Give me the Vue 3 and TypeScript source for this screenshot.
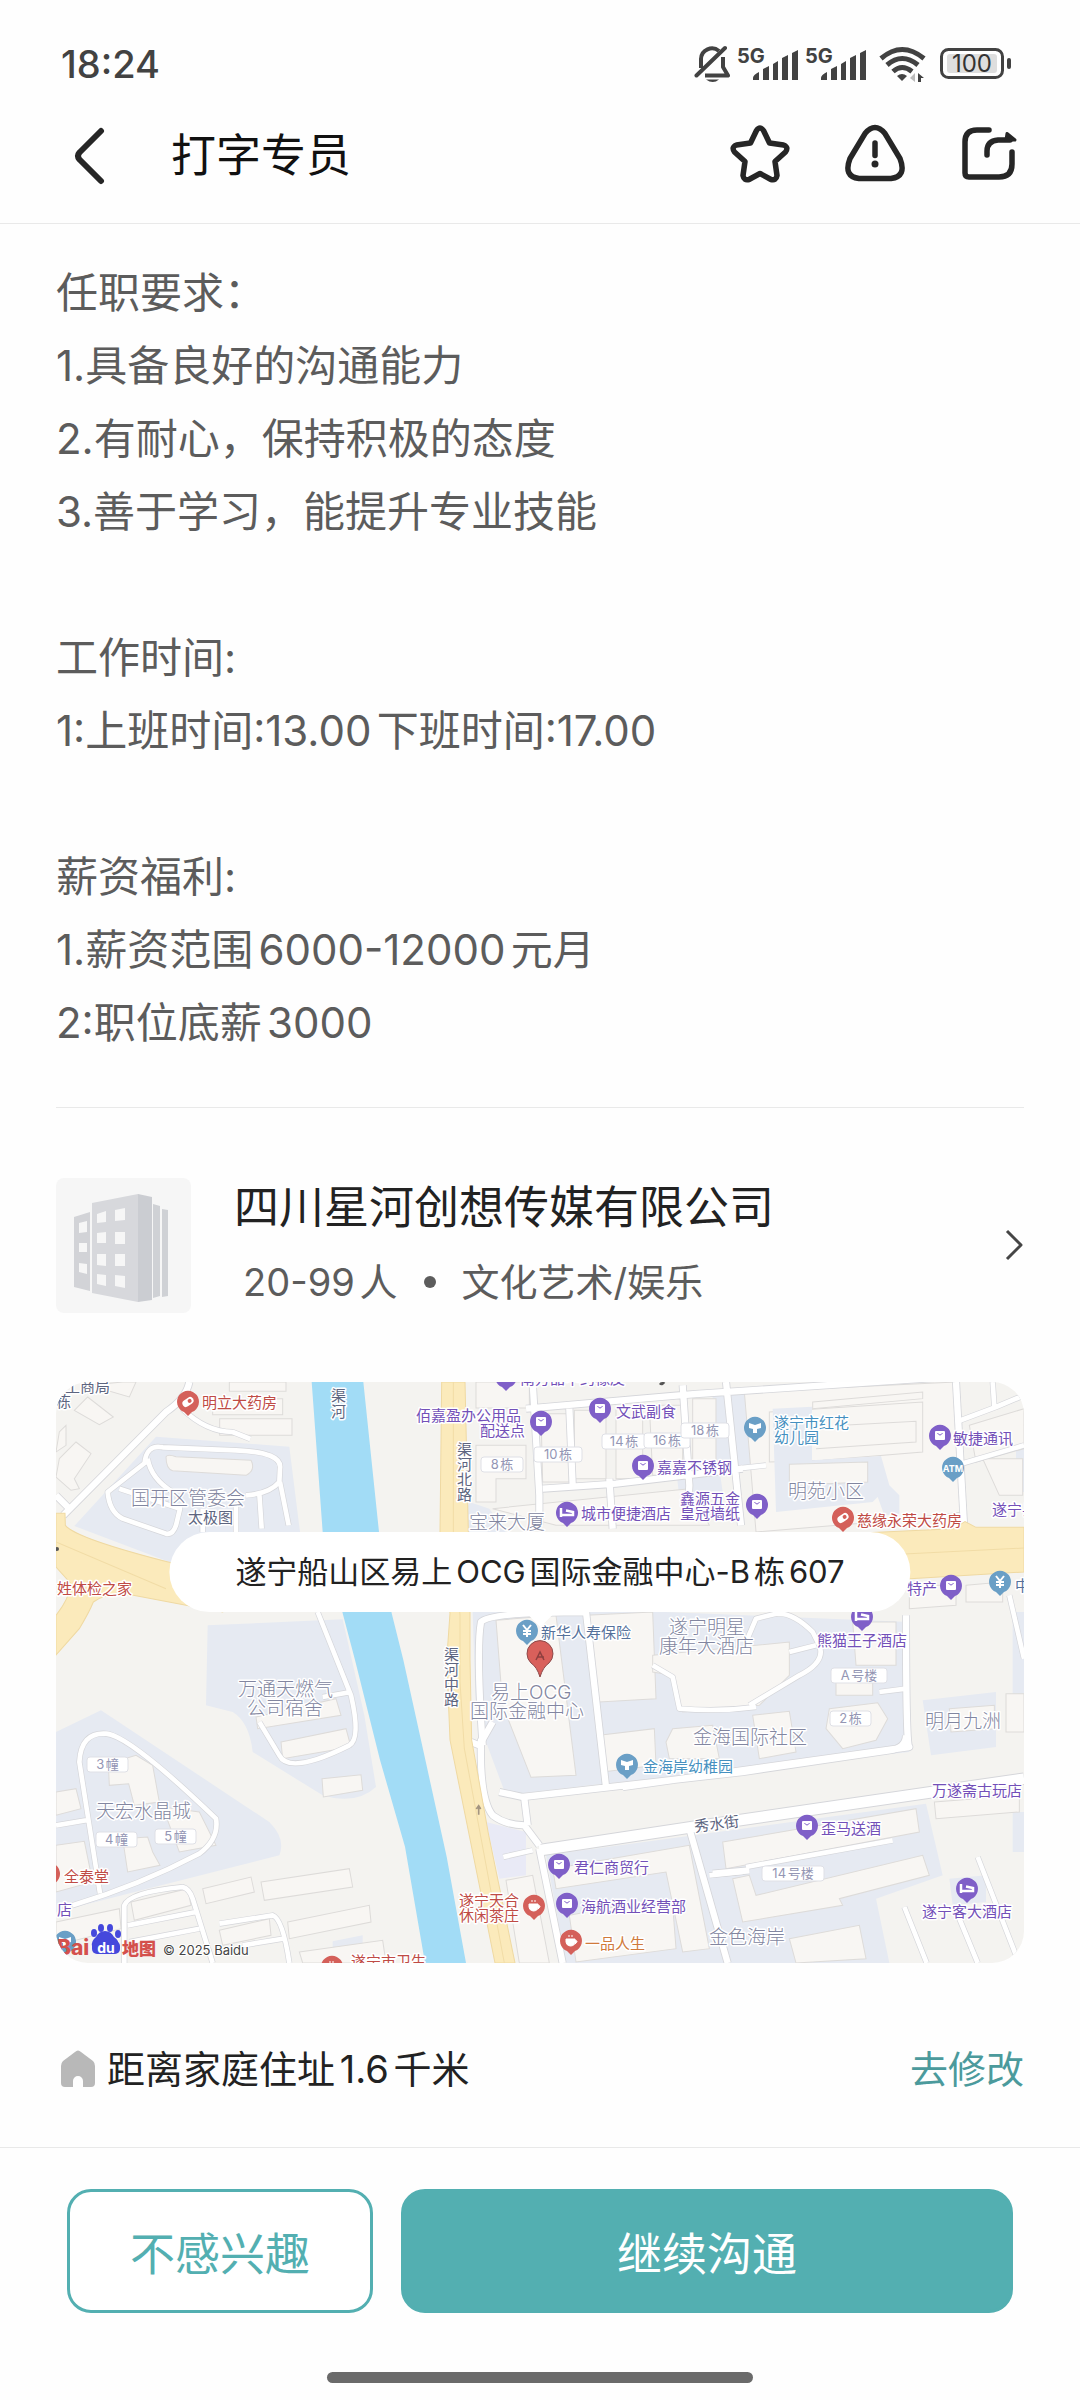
<script setup lang="ts">
type Tone = 'shop' | 'health' | 'school' | 'area' | 'road' | 'food' | 'bank'
interface Label { t: string; x: number; y: number; k: Tone }
interface Pin { x: number; y: number; k: 'shop' | 'health' | 'school' | 'hotel' | 'bank' | 'atm' | 'food' }
interface Badge { t: string; x: number; y: number; w: number }

const jobLines: string[] = [
  '任职要求：',
  '1.具备良好的沟通能力',
  '2.有耐心，保持积极的态度',
  '3.善于学习，能提升专业技能',
  '',
  '工作时间:',
  '1:上班时间:13.00下班时间:17.00',
  '',
  '薪资福利:',
  '1.薪资范围6000-12000元月',
  '2:职位底薪3000',
]

const labels: Label[] = [
  { t: '工商局', x: 9, y: 10, k: 'road' },
  { t: '栋', x: 0, y: 25, k: 'road' },
  { t: '明立大药房', x: 146, y: 26, k: 'health' },
  { t: '渠', x: 275, y: 19, k: 'road' },
  { t: '河', x: 275, y: 35, k: 'road' },
  { t: '国开区管委会', x: 75, y: 123, k: 'area' },
  { t: '太极图', x: 132, y: 141, k: 'road' },
  { t: '姓体检之家', x: 1, y: 212, k: 'health' },
  { t: '南方晶中约橡皮', x: 464, y: 2, k: 'shop' },
  { t: '佰嘉盈办公用品', x: 360, y: 39, k: 'shop' },
  { t: '配送点', x: 424, y: 54, k: 'shop' },
  { t: '文武副食', x: 560, y: 35, k: 'shop' },
  { t: '嘉嘉不锈钢', x: 601, y: 91, k: 'shop' },
  { t: '城市便捷酒店', x: 525, y: 137, k: 'shop' },
  { t: '鑫源五金', x: 624, y: 122, k: 'shop' },
  { t: '皇冠墙纸', x: 624, y: 137, k: 'shop' },
  { t: '宝来大厦', x: 413, y: 147, k: 'area' },
  { t: '渠', x: 401, y: 73, k: 'road' },
  { t: '河', x: 401, y: 88, k: 'road' },
  { t: '北', x: 401, y: 103, k: 'road' },
  { t: '路', x: 401, y: 118, k: 'road' },
  { t: '渠', x: 388, y: 278, k: 'road' },
  { t: '河', x: 388, y: 293, k: 'road' },
  { t: '中', x: 388, y: 308, k: 'road' },
  { t: '路', x: 388, y: 323, k: 'road' },
  { t: '新华人寿保险', x: 485, y: 256, k: 'bank' },
  { t: '遂宁明星', x: 613, y: 252, k: 'area' },
  { t: '康年大酒店', x: 603, y: 271, k: 'area' },
  { t: '遂宁市红花', x: 718, y: 46, k: 'school' },
  { t: '幼儿园', x: 718, y: 61, k: 'school' },
  { t: '敏捷通讯', x: 897, y: 62, k: 'shop' },
  { t: '明苑小区', x: 732, y: 116, k: 'area' },
  { t: '慈缘永荣大药房', x: 801, y: 144, k: 'health' },
  { t: '遂宁县', x: 936, y: 133, k: 'shop' },
  { t: '特产', x: 851, y: 212, k: 'shop' },
  { t: '中', x: 959, y: 209, k: 'bank' },
  { t: '熊猫王子酒店', x: 761, y: 264, k: 'shop' },
  { t: '万通天燃气', x: 182, y: 314, k: 'area' },
  { t: '公司宿舍', x: 191, y: 333, k: 'area' },
  { t: '天宏水晶城', x: 40, y: 436, k: 'area' },
  { t: '全泰堂', x: 8, y: 500, k: 'health' },
  { t: '店', x: 1, y: 533, k: 'shop' },
  { t: '遂宁市卫生', x: 295, y: 585, k: 'health' },
  { t: '易上OCG', x: 435, y: 317, k: 'area' },
  { t: '国际金融中心', x: 414, y: 336, k: 'area' },
  { t: '金海岸幼稚园', x: 587, y: 390, k: 'school' },
  { t: '君仁商贸行', x: 518, y: 491, k: 'shop' },
  { t: '遂宁天合', x: 403, y: 524, k: 'health' },
  { t: '休闲茶庄', x: 403, y: 539, k: 'health' },
  { t: '海航酒业经营部', x: 525, y: 530, k: 'shop' },
  { t: '一品人生', x: 529, y: 567, k: 'food' },
  { t: '金海国际社区', x: 637, y: 362, k: 'area' },
  { t: '明月九洲', x: 869, y: 346, k: 'area' },
  { t: '万遂斋古玩店', x: 876, y: 414, k: 'shop' },
  { t: '歪马送酒', x: 765, y: 452, k: 'shop' },
  { t: '遂宁客大酒店', x: 866, y: 535, k: 'shop' },
  { t: '金色海岸', x: 653, y: 562, k: 'area' },
]

const pins: Pin[] = [
  { x: 132, y: 20, k: 'health' },
  { x: 450, y: -5, k: 'shop' },
  { x: 485, y: 40, k: 'shop' },
  { x: 544, y: 27, k: 'shop' },
  { x: 587, y: 84, k: 'shop' },
  { x: 511, y: 131, k: 'hotel' },
  { x: 701, y: 123, k: 'shop' },
  { x: 699, y: 46, k: 'school' },
  { x: 884, y: 54, k: 'shop' },
  { x: 897, y: 86, k: 'atm' },
  { x: 787, y: 136, k: 'health' },
  { x: 895, y: 204, k: 'shop' },
  { x: 944, y: 200, k: 'bank' },
  { x: 471, y: 249, k: 'bank' },
  { x: 806, y: 235, k: 'hotel' },
  { x: -7, y: 492, k: 'health' },
  { x: 9, y: 560, k: 'school' },
  { x: 276, y: 585, k: 'food' },
  { x: 571, y: 383, k: 'school' },
  { x: 503, y: 483, k: 'shop' },
  { x: 478, y: 524, k: 'food' },
  { x: 511, y: 522, k: 'shop' },
  { x: 515, y: 559, k: 'food' },
  { x: 751, y: 444, k: 'shop' },
  { x: 911, y: 507, k: 'hotel' },
]

const badges: Badge[] = [
  { t: '8栋', x: 425, y: 75, w: 42 },
  { t: '10栋', x: 478, y: 65, w: 48 },
  { t: '14栋', x: 546, y: 52, w: 44 },
  { t: '16栋', x: 588, y: 51, w: 46 },
  { t: '18栋', x: 625, y: 41, w: 48 },
  { t: '3幢', x: 31, y: 375, w: 41 },
  { t: '4幢', x: 40, y: 450, w: 41 },
  { t: '5幢', x: 99, y: 447, w: 41 },
  { t: 'A号楼', x: 775, y: 286, w: 56 },
  { t: '2栋', x: 774, y: 329, w: 41 },
  { t: '14号楼', x: 706, y: 484, w: 62 },
]

const pinColor: Record<Pin['k'], string> = {
  shop: '#7f5fc8', hotel: '#7f5fc8', health: '#d4605a', food: '#d4605a',
  school: '#6a9fc6', bank: '#6a9fc6', atm: '#6a9fc6',
}
</script>

<template>
  <div class="page">
    <div class="status">
      <span class="clock">18:24</span>
      <div class="indicators">
        <svg class="bell" width="36" height="40" viewBox="0 0 36 40" fill="none" stroke="#424242" stroke-width="4">
          <path d="M7 24V15a11 11 0 0 1 18-8M29 13v10l5 8.500H11" stroke-linejoin="round" />
          <path d="M2.500 31.500 31 4" stroke-linecap="round" />
          <path d="M12 35.500h13q-6 5-13 0Z" fill="#424242" stroke="none" />
        </svg>
        <svg v-for="n in 2" :key="n" class="signal" width="62" height="36" viewBox="0 0 62 36" fill="#424242">
          <text x="0" y="17" class="g5">5G</text>
          <path d="M16 32q0-3 6-6v8h-6ZM26 23l6-3v14h-6ZM36 18l5-3v19h-5ZM45 12l6-3v25h-6ZM55 7l6-3v30h-6Z" />
        </svg>
        <svg class="wifi" width="48" height="38" viewBox="0 0 48 38" fill="none" stroke="#424242" stroke-width="5">
          <path d="M2 13.500q21-18 43 0M8 20q15-13 31 0M14 26.500q9-8 19 0" />
          <path d="M18 31q5-4 10 0l-5 5Z" fill="#424242" stroke="none" />
          <path d="M36 28v9l-5-4Z" fill="#bbb" stroke="none" />
          <path d="M39 37v-9l6 5h-3v4Z" fill="#424242" stroke="none" />
        </svg>
        <svg class="battery" width="72" height="32" viewBox="0 0 72 32">
          <rect x="1.500" y="1.500" width="61" height="28" rx="7" fill="#fff" stroke="#424242" stroke-width="3" />
          <rect x="7" y="6" width="50" height="19" rx="3" fill="#dedede" />
          <rect x="67" y="10" width="4" height="11" rx="2" fill="#424242" />
          <text x="32" y="24" text-anchor="middle" class="pct">100</text>
        </svg>
      </div>
    </div>

    <header class="nav">
      <button class="icon-btn back" aria-label="返回">
        <svg width="32" height="58" viewBox="0 0 32 58" fill="none" stroke="#262626" stroke-width="6" stroke-linecap="round" stroke-linejoin="round">
          <path d="M28 4 6.500 25.500q-3 3.500 0 7L28 54" />
        </svg>
      </button>
      <h1>打字专员</h1>
      <div class="tools">
        <button class="icon-btn" aria-label="收藏">
          <svg width="60" height="60" viewBox="0 0 60 60" fill="none" stroke="#262626" stroke-width="5.500" stroke-linejoin="round">
            <path d="M26.500 6.500q3.500-5 7 0l6 12.500 14 2q5.500 2 2 7L45 37.500l2 14q-1 5.500-6 4L30 49.500l-11 6q-5 1.500-6-4l2-14L4.500 28q-3.500-5 2-7l14-2Z" />
          </svg>
        </button>
        <button class="icon-btn" aria-label="举报">
          <svg width="60" height="60" viewBox="0 0 60 60" fill="none" stroke="#262626" stroke-width="5.500" stroke-linecap="round">
            <path d="M20 9.500q10-12 20 0l15 25q7 18-9 20H14q-16-2-9-20Z" />
            <path d="M30 19v12.500" />
            <circle cx="30" cy="40" r="3.500" fill="#262626" stroke="none" />
          </svg>
        </button>
        <button class="icon-btn" aria-label="分享">
          <svg width="60" height="60" viewBox="0 0 60 60" fill="none" stroke="#262626" stroke-width="5.500" stroke-linecap="round">
            <path d="M29 6H17Q5 6 5 18v31q0 4 4 4h30q13 0 13-13V28" stroke-linejoin="round" />
            <path d="M27 31v-4q0-10 11-11h12" />
            <path d="M47 9.500 55 16H46Z" fill="#262626" stroke-width="3" stroke-linejoin="round" />
          </svg>
        </button>
      </div>
    </header>

    <main>
      <section class="description">
        <p v-for="(line, i) in jobLines" :key="i">{{ line }}</p>
      </section>

      <a class="company" href="#company">
        <svg class="logo" width="135" height="135" viewBox="0 0 135 135">
          <rect width="135" height="135" rx="8" fill="#f6f6f6" />
          <path d="M18 39 34 34v79l-16-4Z" fill="#d2d3d7" />
          <path d="M36 25 82 16v108l-46-9Z" fill="#d7d8dc" />
          <path d="M82 16l14 3v103l-14 2Z" fill="#cbcdd2" />
          <path d="M97 26l7 2v90l-7 2ZM106 31l6 1v86l-6 1Z" fill="#cfd1d5" />
          <path d="M41 36l9-3v11l-9 1ZM59 32l10-2v12l-10 1ZM41 55l9-1v11h-9ZM59 54h10v12H59ZM41 76h9v12l-9-1ZM59 76h10v12H59ZM41 96l9 1v11l-9-2ZM59 97l10 1v12l-10-2ZM23 45l8-2v11l-8 1ZM23 65h8v9h-8ZM23 85l8 1v10l-8-2Z" fill="#f6f6f6" />
        </svg>
        <div class="company-text">
          <strong>四川星河创想传媒有限公司</strong>
          <span class="meta"><span>20-99人</span><i class="dot"></i><span>文化艺术/娱乐</span></span>
        </div>
        <svg width="20" height="34" viewBox="0 0 20 34" fill="none" stroke="#454545" stroke-width="3" stroke-linejoin="round">
          <path d="M3 3 17 17 3 31" />
        </svg>
      </a>

      <section class="map" aria-label="公司位置">
        <svg class="map-art" viewBox="0 0 968 581">
          <rect width="968" height="581" fill="#f4f3f0" />
          <g transform="scale(.33334)">
            <!-- city blocks -->
            <g fill="#e6eaf2">
              <path d="M300 164 700 194 732 450H560L350 544 55 432Z" />
              <path d="M455 730 860 712 925 1000 960 1215Q900 1270 800 1240L590 1110Q580 1020 530 990L450 970Z" />
              <path d="M0 1050 135 985 640 1320Q690 1370 670 1420L0 1590Z" />
              <path d="M1250 690H1830L2560 720V1110L1600 1210 1350 1240 1260 1000Z" />
              <path d="M1210 450 1240 360 1300 380 1350 450Z" />
              <path d="M2150 75 2270 75V230L2480 220 2500 300 2530 340V395L2490 400 2470 360 2150 390Z" />
              <path d="M1970 36H2100V260H1970ZM2600 955 2820 930V1095L2625 1120Z" />
              <path d="M1470 1420 2610 1265 2660 1480 2460 1550 2500 1743H1530Z" />
              <path d="M2870 690H2904V950H2870ZM2870 1290H2904V1410H2870ZM2680 1490 2790 1480V1560L2690 1570Z" />
              <path d="M830 1678 920 1660V1690L830 1705Z" />
              <path d="M1860 260H1990L2000 330 1870 345ZM2880 200H2904V330H2880Z" />
            </g>
            <path d="M1290 1320 1410 1350V1480L1330 1490Z" fill="#e9eaf6" />
            <!-- buildings -->
            <g fill="#f8f6f3" stroke="#dddbd9" stroke-width="3">
              <path d="M330 224Q335 215 360 224L585 235Q600 265 570 280L350 266Q330 260 330 224Z" />
              <path d="M491 110H708V160H491ZM520 0H690V28H520ZM470 50H680V98H470Z" />
              <path d="M55 85 95 45 172 105 130 128ZM30 130 10 150 0 210 30 190ZM10 230 60 180 105 215 55 290 70 320 45 325 0 285ZM100 10 200 0 240 0 220 45Z" />
              <path d="M600 1005 840 950 855 1000 605 1040ZM675 1080 870 1040 885 1095 680 1130ZM798 1190 915 1178 920 1225 802 1245Z" />
              <path d="M157 1145 240 1120 290 1150 310 1260 235 1270 218 1205 160 1210ZM320 1275 430 1290 480 1390 370 1410ZM200 1370 275 1365 290 1410 312 1450 215 1470ZM0 1230 60 1220 75 1280 0 1300ZM0 1390 85 1378 110 1500 0 1530Z" />
              <path d="M440 1520 585 1485 595 1530 450 1565ZM615 1500 880 1460 890 1515 625 1555ZM695 1620 940 1570 945 1620 700 1670ZM490 1645 640 1610 645 1660 500 1690ZM225 1560 395 1520 405 1570 235 1615ZM0 1620 190 1580 195 1640 0 1690ZM730 1710 980 1675 990 1743H740Z" />
              <path d="M1260 0H1420V78H1260ZM1320 190H1410V290H1320V360H1260V190ZM1455 95H1540V300H1460ZM1555 85H1650V290H1555ZM1680 75H1760V290H1680ZM1780 70H1880V280H1790ZM1910 50H1980V270H1910Z" />
              <path d="M1310 380 1900 320 1960 430H1500Z" />
              <path d="M1320 715 1500 700 1560 1180 1425 1186 1340 970ZM1590 700 1790 690 1800 950 1630 960ZM1630 1060 1795 1040 1800 1150 1640 1170ZM1830 1080 1850 1040 1970 1030 1990 1130 1840 1130Z" />
              <path d="M1790 820 2200 780V880L2110 970 1880 990 1850 880 1790 870Z" />
              <path d="M2065 30 2700 0 2720 390 2460 420 2100 450ZM2140 90 2600 60V210L2300 235 2140 240Z" />
            </g>
            <path d="M2150 80 2268 74V235L2475 222 2500 310 2530 340V395L2485 400 2465 345 2450 360 2160 390Z" fill="#e6eaf2" />
            <g fill="#f8f6f3" stroke="#dddbd9" stroke-width="3">
              <path d="M2200 247 2435 240V300L2200 310Z" />
              <path d="M2270 60 2600 30V50L2270 80ZM2360 130 2580 118V180L2280 200M2740 130 2904 80V200L2760 240Z" />
              <path d="M2090 1000 2200 988 2220 1110 2110 1130ZM2320 980 2465 962 2495 1010 2460 1075 2360 1100 2310 1040ZM2340 900 2450 900V940H2340ZM2390 720 2520 720V850H2400ZM2680 980 2815 970V1040L2685 1050ZM2850 935H2904V1050H2850Z" />
              <path d="M2560 610H2700V670L2560 680ZM2730 610 2840 600V660H2730ZM2780 230H2900V340H2830Z" />
              <path d="M2635 1260 2890 1240V1290L2640 1310ZM2000 1380 2580 1280 2590 1350 2010 1460ZM2030 1490 2080 1480 2100 1540 2600 1420 2620 1480 2350 1550 2360 1570 2060 1620ZM2200 1670 2410 1630 2430 1730 2220 1743ZM1490 1460 1900 1390 1960 1700 1880 1710 1830 1470 1500 1520ZM1540 1600 1700 1570 1850 1570 1860 1700 1560 1740ZM1350 1495 1430 1480 1480 1743H1390Z" />
            </g>
            <!-- side streets: grey casing under white fill -->
            <g v-for="pass in 2" :key="pass" fill="none" :stroke="pass === 1 ? '#d5d6da' : '#fff'" stroke-linejoin="round">
              <g :stroke-width="pass === 1 ? 18 : 14">
                <path d="M378 80Q450 150 530 150L583 171M265 248Q270 185 320 196L540 205Q680 210 672 260L670 300Q640 335 570 340M270 240 155 330Q160 390 200 410L330 455Q350 460 360 430L372 380 190 320M275 230Q285 290 350 330M672 300 698 430M610 335 617 440M540 370V450M440 380V450" />
                <path d="M785 690 885 940Q915 1070 880 1090 700 1180 670 1120L610 1020M885 930 800 945" />
                <path d="M132 1534 70 1140Q75 1050 150 1055 220 1060 480 1310 490 1370 430 1415 250 1510 50 1570M0 1330 100 1313M205 1743V1570Q220 1530 380 1515 400 1520 410 1550L470 1743M215 1630 420 1590M220 1680 430 1640M490 1625 650 1600Q680 1610 700 1743M560 1690 680 1670" />
                <path d="M2545 1575 2612 1743M2710 1610 2765 1743M2765 1425 2880 1720M2070 1455 2510 1375M1960 1480 2060 1470M1342 1425 1430 1405" />
                <path d="M2080 970 2230 880Q2310 840 2290 790L2270 750Q2210 690 2160 695L2100 710 2070 780M2200 810 2280 790M1790 850 1850 885 1870 980Q1990 990 2100 975M2470 930 2550 920" />
                <path d="M2860 640 2904 830M2700 120 2820 75 2904 40M2810 0 2815 75M2700 250 2904 190M2040 260 2130 250" />
              </g>
              <g :stroke-width="pass === 1 ? 24 : 19">
                <path d="M0 340 35 375M22 400 330 90Q390 50 400 0" />
                <path d="M1410 80 1870 40 1920 36 2904 -30M1430 0 1450 340 1450 430M1540 80 1550 310M1660 290 1670 440M1880 10 1900 310 1895 400M2010 0 2055 430M1460 320 1680 305 2060 260" />
                <path d="M2700 0 2725 450" />
                <path d="M1280 1090Q1260 800 1275 720 1300 690 1600 690M1590 690 1650 1215M1700 1215 2560 1095Q2550 1100 2550 700M1330 1230 1400 1245 2060 1170 2500 1105Q2550 1100 2550 1060" />
                <path d="M1275 1070Q1270 1250 1310 1300 1350 1330 1405 1330L1450 1390M1405 1250 1415 1330M1245 1080 1270 1090 1310 1020" />
                <path d="M1900 1340 2015 1743M1450 1400 1520 1743M1970 1475 2080 1465" />
              </g>
              <g :stroke-width="pass === 1 ? 38 : 32">
                <path d="M1450 1405 1910 1335 2904 1190" />
              </g>
            </g>
            <path d="M767 0H922L969 450 1007 694 1042 834 1172 1424 1230 1743H1107L1047 1394 972 1134 897 834 860 694 800 450Z" fill="#a2dcf6" />
            <!-- main roads -->
            <g fill="#fbeabb" stroke="#efd9a2" stroke-width="3">
              <path d="M1157 0H1227L1237 450 1242 694 1242 834 1247 1074 1297 1354 1377 1743H1317L1182 1074 1172 834 1182 694 1152 450Z" />
              <path d="M0 394H27L28 430Q60 470 352 544L500 560V690L402 672 232 640Q150 630 112 660 100 690 70 740L0 819V700Q40 650 45 605L0 555Z" />
              <path d="M2400 454 2692 440 2727 419 2760 436H2904V570L2562 590H2400Z" />
            </g>
            <path d="M1192 0V450L1212 700V900L1225 1100 1345 1743M0 480 330 620M2500 518 2904 498" fill="none" stroke="#f1dca6" stroke-width="3" />
            <path d="M1268 1270v28m-7-17 7-10 6 10" stroke="#a39480" stroke-width="5" fill="none" />
          </g>

          <g v-for="(b, i) in badges" :key="'b' + i">
            <rect :x="b.x" :y="b.y" :width="b.w" height="15" rx="3" fill="#fff" stroke="#dfe0e6" />
            <text :x="b.x + b.w / 2" :y="b.y + 12" text-anchor="middle" class="badge">{{ b.t }}</text>
          </g>

          <g v-for="(p, i) in pins" :key="'p' + i" :transform="`translate(${p.x} ${p.y})`">
            <path d="M0 14-4 10A11 11 0 1 1 4 10Z" :fill="pinColor[p.k]" />
            <g v-if="p.k === 'shop'">
              <rect x="-5" y="-5" width="10" height="9" rx="1" fill="#fff" />
              <path d="M-2.500-3Q0 1 2.500-3" fill="none" :stroke="pinColor[p.k]" />
            </g>
            <path v-else-if="p.k === 'hotel'" d="M-6-5V4M-6 2H6V-1L-1-2.500" fill="none" stroke="#fff" stroke-width="2.500" />
            <g v-else-if="p.k === 'health'" transform="rotate(-35)">
              <rect x="-6" y="-3.500" width="12" height="7" rx="3.500" fill="#fff" />
              <circle cx="2" cy="0" r="2" :fill="pinColor[p.k]" />
            </g>
            <path v-else-if="p.k === 'school'" d="M-6-5 0-3 6-5V0L2 1V5H-2V1L-6 0Z" fill="#fff" />
            <path v-else-if="p.k === 'bank'" d="M-4-6 0-1 4-6M0-1V6M-4 0H4M-4 3H4" fill="none" stroke="#fff" stroke-width="2" />
            <path v-else-if="p.k === 'food'" d="M-5-2H4V1Q4 5-1 5-5 4-5 1ZM4-1q4 1 0 4M-2-6v2M1-6v2" fill="#fff" stroke="#fff" />
            <text v-else y="4" text-anchor="middle" class="atm">ATM</text>
          </g>

          <text v-for="(l, i) in labels" :key="'l' + i" :x="l.x" :y="l.y" class="label" :class="l.k">{{ l.t }}</text>
          <text x="639" y="450" transform="rotate(-7 639 450)" class="label road">秀水街</text>
          <path d="M604 1q2 2 4-1" stroke="#555" stroke-width="3" fill="none" />
          <circle cx="1" cy="167" r="2" fill="#555" />

          <path d="M484 295q-3-10-9-14a13 13 0 1 1 18 0q-6 4-9 14Z" fill="#d9605b" stroke="#8d4a4a" />
          <path d="M480 278 484 270 488 278M481 275H488" fill="none" stroke="#8d3f3f" stroke-width="1.500" />

          <text x="1" y="573" class="baidu">Bai</text>
          <g fill="#4548dc">
            <path d="M49 549q6 0 9 6 6 4 4 9-2 5-8 4h-10q-7 1-8-4-1-5 4-9 3-6 9-6Z" />
            <ellipse cx="38" cy="551" rx="3" ry="4" />
            <ellipse cx="45" cy="546" rx="3" ry="4" />
            <ellipse cx="54" cy="546" rx="3" ry="4" />
            <ellipse cx="62" cy="552" rx="3" ry="4" />
          </g>
          <rect x="36" y="559" width="28" height="13" rx="5" fill="#4548dc" />
          <text x="50" y="571" text-anchor="middle" class="du">du</text>
          <text x="66" y="573" class="ditu">地图</text>
          <text x="107" y="573" class="copy">© 2025 Baidu</text>
        </svg>
        <div class="bubble">遂宁船山区易上OCG国际金融中心-B栋607</div>
      </section>

      <section class="distance">
        <svg width="34" height="38" viewBox="0 0 34 38" fill="#b8b8b8">
          <path d="M14 2q3-3 6 0l12 9q2 2 2 5v17q0 4-4 4h-8v-6a5 5 0 0 0-10 0v6H4q-4 0-4-4V16q0-3 2-5Z" />
        </svg>
        <span>距离家庭住址1.6千米</span>
        <a href="#address">去修改</a>
      </section>
    </main>

    <footer>
      <div class="actions">
        <button class="plain">不感兴趣</button>
        <button class="primary">继续沟通</button>
      </div>
      <div class="home-bar"></div>
    </footer>
  </div>
</template>

<style>
body {
  margin: 0;
  background: #fefefe;
}
</style>

<style scoped>
.page {
  min-height: 100vh;
  display: flex;
  flex-direction: column;
  background: #fefefe;
  color: #222;
  font-family: Inter, "Noto Sans CJK SC", sans-serif;
  text-autospace: normal;
}
main {
  flex: 1;
}
button {
  font-family: inherit;
  cursor: pointer;
}
.status {
  display: flex;
  align-items: center;
  justify-content: space-between;
  height: 64px;
  padding: 32px 68px 0 61px;
}
.clock {
  font-size: 38px;
  font-weight: 500;
  color: #424242;
}
.indicators {
  display: flex;
  align-items: center;
}
.signal {
  margin-left: 6px;
  overflow: visible;
}
.bell {
  margin-right: 1px;
}
.wifi {
  margin: 0 13px 0 12px;
}
.g5 {
  font-size: 20px;
  font-weight: 700;
}
.pct {
  font-size: 24px;
  fill: #333;
}
.nav {
  display: flex;
  align-items: center;
  height: 120px;
  padding: 0 60px 7px 73px;
  border-bottom: 1px solid #e9e9e9;
}
.icon-btn {
  display: flex;
  padding: 0;
  border: 0;
  background: none;
}
h1 {
  flex: 1;
  margin: 0 0 0 66px;
  font-size: 45px;
  line-height: 64px;
  font-weight: 400;
  color: #111;
}
.tools {
  display: flex;
  gap: 55px;
  margin-bottom: 4px;
}
.description {
  padding: 32px 56px 0;
}
.description p {
  margin: 0;
  min-height: 73px;
  font-size: 42px;
  line-height: 73px;
  color: #5c5c5c;
}
.company {
  display: flex;
  align-items: center;
  margin: 48px 56px 0;
  padding: 63px 0;
  border-top: 1px solid #e9e9e9;
  color: inherit;
  text-decoration: none;
}
.company-text {
  flex: 1;
  display: flex;
  flex-direction: column;
  margin-left: 43px;
}
.company-text strong {
  font-size: 45px;
  line-height: 74px;
  font-weight: 400;
}
.meta {
  display: flex;
  align-items: center;
  padding-left: 9px;
  font-size: 38px;
  line-height: 74px;
  color: #5c5c5c;
}
.dot {
  width: 12px;
  height: 12px;
  margin: 0 26px;
  border-radius: 50%;
  background: #5c5c5c;
}
.map {
  position: relative;
  margin: 0 56px;
}
.map-art {
  display: block;
  width: 100%;
  height: auto;
  border-radius: 32px;
}
.bubble {
  position: absolute;
  top: 150px;
  left: 50%;
  transform: translateX(-50%);
  padding: 0 66px;
  border-radius: 40px;
  background: #fff;
  font-size: 31px;
  line-height: 80px;
  white-space: nowrap;
}
.bubble::after {
  content: "";
  position: absolute;
  top: 80px;
  left: 50%;
  margin-left: -15px;
  border: 15px solid transparent;
  border-top-color: #fff;
}
.label {
  font-size: 15px;
  paint-order: stroke;
  stroke: #fff;
  stroke-width: 3px;
  stroke-linejoin: round;
  text-autospace: no-autospace;
}
.shop { fill: #7350b8; }
.health { fill: #bf4b45; }
.school { fill: #4590c0; }
.road { fill: #5d6580; }
.food { fill: #d07a3c; }
.bank { fill: #55719b; }
.area {
  font-size: 19px;
  font-weight: 300;
  fill: #8286a0;
}
.badge {
  font-size: 13px;
  fill: #9496b4;
}
.atm {
  font-size: 9px;
  font-weight: 700;
  fill: #fff;
}
.baidu {
  font-size: 21px;
  font-weight: 800;
  fill: #d4504c;
}
.du {
  font-size: 14px;
  font-weight: 700;
  fill: #fff;
}
.ditu {
  font-size: 17px;
  font-weight: 800;
  fill: #d4504c;
}
.copy {
  font-size: 13px;
  fill: #444;
  paint-order: stroke;
  stroke: #fff;
  stroke-width: 2px;
}
.distance {
  display: flex;
  align-items: center;
  padding: 78px 56px 50px 61px;
  font-size: 38px;
  line-height: 56px;
}
.distance span {
  flex: 1;
  margin-left: 12px;
}
.distance a {
  color: #4b9a9c;
  text-decoration: none;
}
footer {
  padding: 41px 67px 17px;
  border-top: 1px solid #e9e9e9;
}
.actions {
  display: grid;
  grid-template-columns: 1fr 2fr;
  gap: 28px;
}
.actions button {
  height: 124px;
  padding: 0;
  border: 3px solid #53afb1;
  border-radius: 24px;
  font-size: 45px;
}
.plain {
  background: #fff;
  color: #53afb1;
}
.primary {
  background: #53afb1;
  color: #fff;
}
.home-bar {
  width: 45%;
  height: 11px;
  margin: 59px auto 0;
  border-radius: 6px;
  background: #6a6a6a;
}
</style>
